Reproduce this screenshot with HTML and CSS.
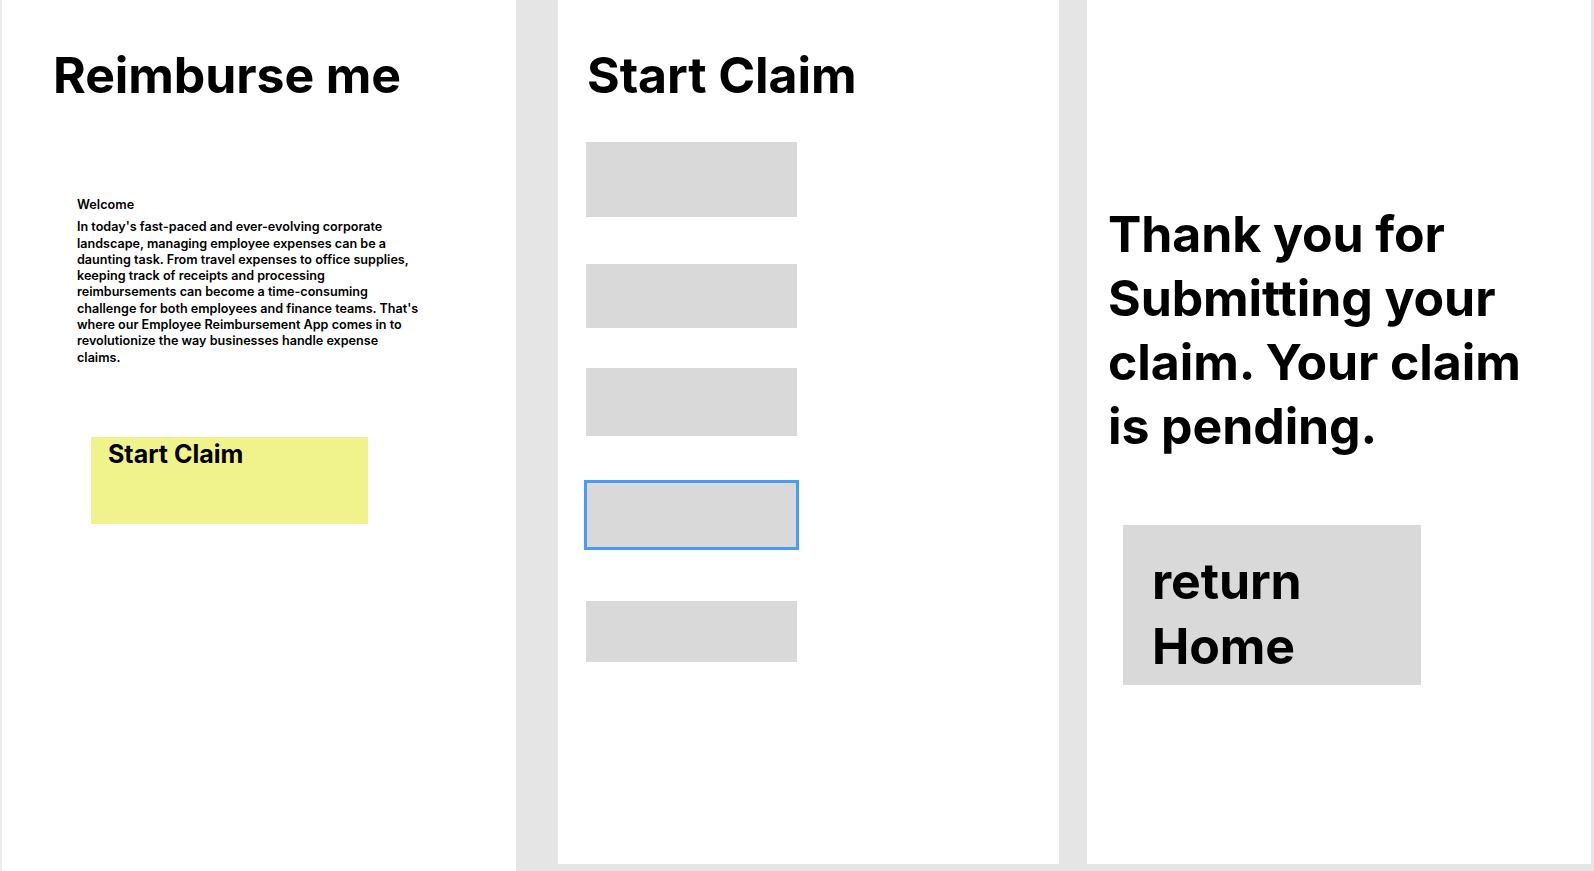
FILE: index.html
```html
<!DOCTYPE html>
<html lang="en">
<head>
<meta charset="utf-8">
<title>Reimburse me</title>
<link rel="stylesheet" href="styles.css">
</head>
<body>
<div class="board">
  <section class="panel panel-home">
    <h1 class="title">Reimburse me</h1>
    <div class="intro">
      <p class="welcome">Welcome</p>
      <p class="intro-text">In today's fast-paced and ever-evolving corporate<br>landscape, managing employee expenses can be a<br>daunting task. From travel expenses to office supplies,<br>keeping track of receipts and processing<br>reimbursements can become a time-consuming<br>challenge for both employees and finance teams. That's<br>where our Employee Reimbursement App comes in to<br>revolutionize the way businesses handle expense<br>claims.</p>
    </div>
    <div class="start-btn">Start Claim</div>
  </section>
  <section class="panel panel-claim">
    <h1 class="title">Start Claim</h1>
    <div class="fields">
      <div class="field f1"></div>
      <div class="field f2"></div>
      <div class="field f3"></div>
      <div class="field f4 selected"></div>
      <div class="field f5"></div>
    </div>
  </section>
  <section class="panel panel-done">
    <p class="thanks">Thank you for<br>Submitting your<br>claim. Your claim<br>is pending.</p>
    <div class="return-btn">return<br>Home</div>
  </section>
</div>
</body>
</html>
```
FILE: styles.css
```css
html, body {
  margin: 0;
  padding: 0;
}
body {
  background: #e5e5e5;
  font-family: Inter, "Noto Sans", sans-serif;
  color: #000;
  width: 1594px;
  height: 871px;
  overflow: hidden;
}
.board {
  display: flex;
  align-items: flex-start;
  height: 871px;
}
.panel {
  background: #fff;
  box-sizing: border-box;
}
.panel-home {
  width: 516px;
  height: 871px;
  border-left: 2px solid #ececec;
  padding: 43px 0 0 51px;
}
.panel-claim {
  width: 501px;
  height: 864px;
  margin-left: 42px;
  padding: 43px 0 0 29px;
}
.panel-done {
  width: 504px;
  height: 864px;
  margin-left: 28px;
  padding: 202px 0 0 21px;
}
.title {
  margin: 0;
  font-size: 50px;
  font-weight: 700;
  line-height: 64px;
  letter-spacing: -0.1px;
}
.intro {
  margin: 90px 0 0 24px;
  width: 400px;
}
.welcome {
  margin: 0;
  font-size: 12.7px;
  font-weight: 600;
  line-height: 16.3px;
}
.intro-text {
  margin: 6px 0 0;
  font-size: 12.6px;
  font-weight: 600;
  line-height: 16.3px;
}
.start-btn {
  margin: 71px 0 0 38px;
  width: 277px;
  height: 87px;
  box-sizing: border-box;
  background: #f0f28c;
  padding: 2px 0 0 17px;
  font-size: 25px;
  font-weight: 700;
  line-height: 30px;
}
.fields {
  display: flex;
  flex-direction: column;
  align-items: flex-start;
  margin-top: 35px;
}
.field {
  width: 211px;
  background: #d9d9d9;
  box-sizing: border-box;
  margin-left: -1px;
}
.f1 { height: 75px; margin-top: 0; }
.f2 { height: 64px; margin-top: 47px; }
.f3 { height: 68px; margin-top: 40px; }
.f4 { height: 70px; margin-top: 44px; }
.f5 { height: 61px; margin-top: 51px; }
.selected {
  width: 215px;
  margin-left: -3px;
  border: 3px solid #4a9bf5;
}
.thanks {
  margin: 0;
  font-size: 50px;
  font-weight: 700;
  line-height: 64px;
  letter-spacing: -0.1px;
}
.return-btn {
  margin: 67px 0 0 15px;
  width: 298px;
  height: 160px;
  box-sizing: border-box;
  background: #d9d9d9;
  padding: 24px 0 0 29px;
  font-size: 50px;
  font-weight: 700;
  line-height: 65px;
  letter-spacing: -0.1px;
}
```
